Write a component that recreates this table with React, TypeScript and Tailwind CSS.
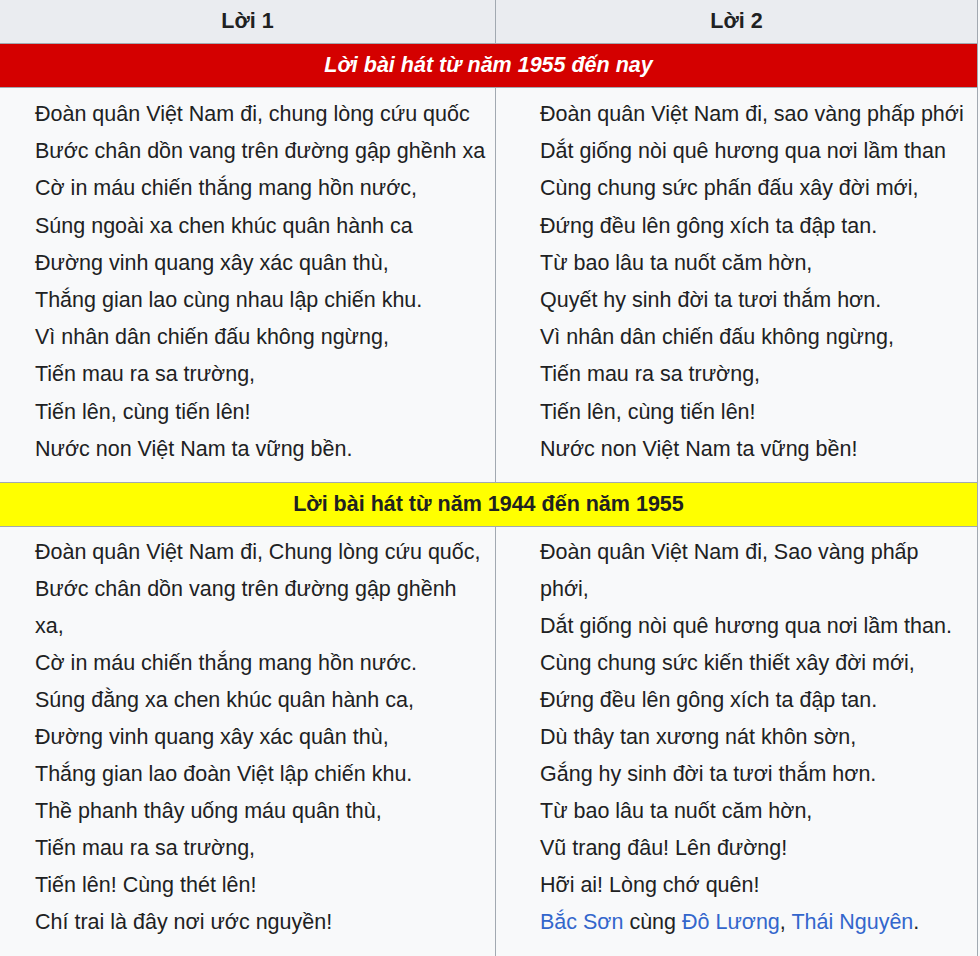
import React from "react"

const blue = "text-[#3366cc]"

const lyrics1955 = {
  left: [
    "Đoàn quân Việt Nam đi, chung lòng cứu quốc",
    "Bước chân dồn vang trên đường gập ghềnh xa",
    "Cờ in máu chiến thắng mang hồn nước,",
    "Súng ngoài xa chen khúc quân hành ca",
    "Đường vinh quang xây xác quân thù,",
    "Thắng gian lao cùng nhau lập chiến khu.",
    "Vì nhân dân chiến đấu không ngừng,",
    "Tiến mau ra sa trường,",
    "Tiến lên, cùng tiến lên!",
    "Nước non Việt Nam ta vững bền.",
  ],
  right: [
    "Đoàn quân Việt Nam đi, sao vàng phấp phới",
    "Dắt giống nòi quê hương qua nơi lầm than",
    "Cùng chung sức phấn đấu xây đời mới,",
    "Đứng đều lên gông xích ta đập tan.",
    "Từ bao lâu ta nuốt căm hờn,",
    "Quyết hy sinh đời ta tươi thắm hơn.",
    "Vì nhân dân chiến đấu không ngừng,",
    "Tiến mau ra sa trường,",
    "Tiến lên, cùng tiến lên!",
    "Nước non Việt Nam ta vững bền!",
  ],
}

const lyrics1944 = {
  left: [
    "Đoàn quân Việt Nam đi, Chung lòng cứu quốc,",
    "Bước chân dồn vang trên đường gập ghềnh xa,",
    "Cờ in máu chiến thắng mang hồn nước.",
    "Súng đằng xa chen khúc quân hành ca,",
    "Đường vinh quang xây xác quân thù,",
    "Thắng gian lao đoàn Việt lập chiến khu.",
    "Thề phanh thây uống máu quân thù,",
    "Tiến mau ra sa trường,",
    "Tiến lên! Cùng thét lên!",
    "Chí trai là đây nơi ước nguyền!",
  ],
  right: [
    "Đoàn quân Việt Nam đi, Sao vàng phấp phới,",
    "Dắt giống nòi quê hương qua nơi lầm than.",
    "Cùng chung sức kiến thiết xây đời mới,",
    "Đứng đều lên gông xích ta đập tan.",
    "Dù thây tan xương nát khôn sờn,",
    "Gắng hy sinh đời ta tươi thắm hơn.",
    "Từ bao lâu ta nuốt căm hờn,",
    "Vũ trang đâu! Lên đường!",
    "Hỡi ai! Lòng chớ quên!",
  ],
}

function Lines({ lines, extra }: { lines: string[]; extra?: React.ReactNode }) {
  return (
    <div className="flex flex-col">
      {lines.map((l, i) => (
        <div key={i}>{l}</div>
      ))}
      {extra}
    </div>
  )
}

function Band({ children, className }: { children: React.ReactNode; className: string }) {
  return (
    <div className={`col-span-2 h-[44px] flex items-center justify-center border-b border-[#a2a9b1] font-bold ${className}`}>
      {children}
    </div>
  )
}

export default function App() {
  return (
    <div className="w-[980px] h-[956px] overflow-hidden bg-[#f8f9fa] text-[21.5px] text-[#202122] font-['Liberation_Sans',Arial,sans-serif]">
      <div className="grid grid-cols-[495px_482px] w-[978px] border-r border-[#a2a9b1] bg-[#f8f9fa]">
        {/* header */}
        <div className="h-[44px] flex items-center justify-center bg-[#eaecf0] border-b border-[#a2a9b1] font-bold">
          Lời 1
        </div>
        <div className="h-[44px] flex items-center justify-center bg-[#eaecf0] border-b border-l border-[#a2a9b1] font-bold">
          Lời 2
        </div>

        <Band className="bg-[#d40000] text-white italic">Lời bài hát từ năm 1955 đến nay</Band>

        <div className="pl-[35px] pr-[6px] pt-[8px] pb-[14px] leading-[37.2px] border-b border-[#a2a9b1]">
          <Lines lines={lyrics1955.left} />
        </div>
        <div className="pl-[44px] pr-[8px] pt-[8px] pb-[14px] leading-[37.2px] border-b border-l border-[#a2a9b1]">
          <Lines lines={lyrics1955.right} />
        </div>

        <Band className="bg-[#ffff00] text-[#202122]">Lời bài hát từ năm 1944 đến năm 1955</Band>

        <div className="pl-[35px] pr-[6px] pt-[7px] pb-[9px] leading-[37px] min-h-[440px]">
          <Lines lines={lyrics1944.left} />
        </div>
        <div className="pl-[44px] pr-[8px] pt-[7px] pb-[9px] leading-[37px] border-l border-[#a2a9b1] min-h-[440px]">
          <Lines
            lines={lyrics1944.right}
            extra={
              <div>
                <span className={blue}>Bắc Sơn</span> cùng <span className={blue}>Đô Lương</span>,{" "}
                <span className={blue}>Thái Nguyên</span>.
              </div>
            }
          />
        </div>
      </div>
    </div>
  )
}
